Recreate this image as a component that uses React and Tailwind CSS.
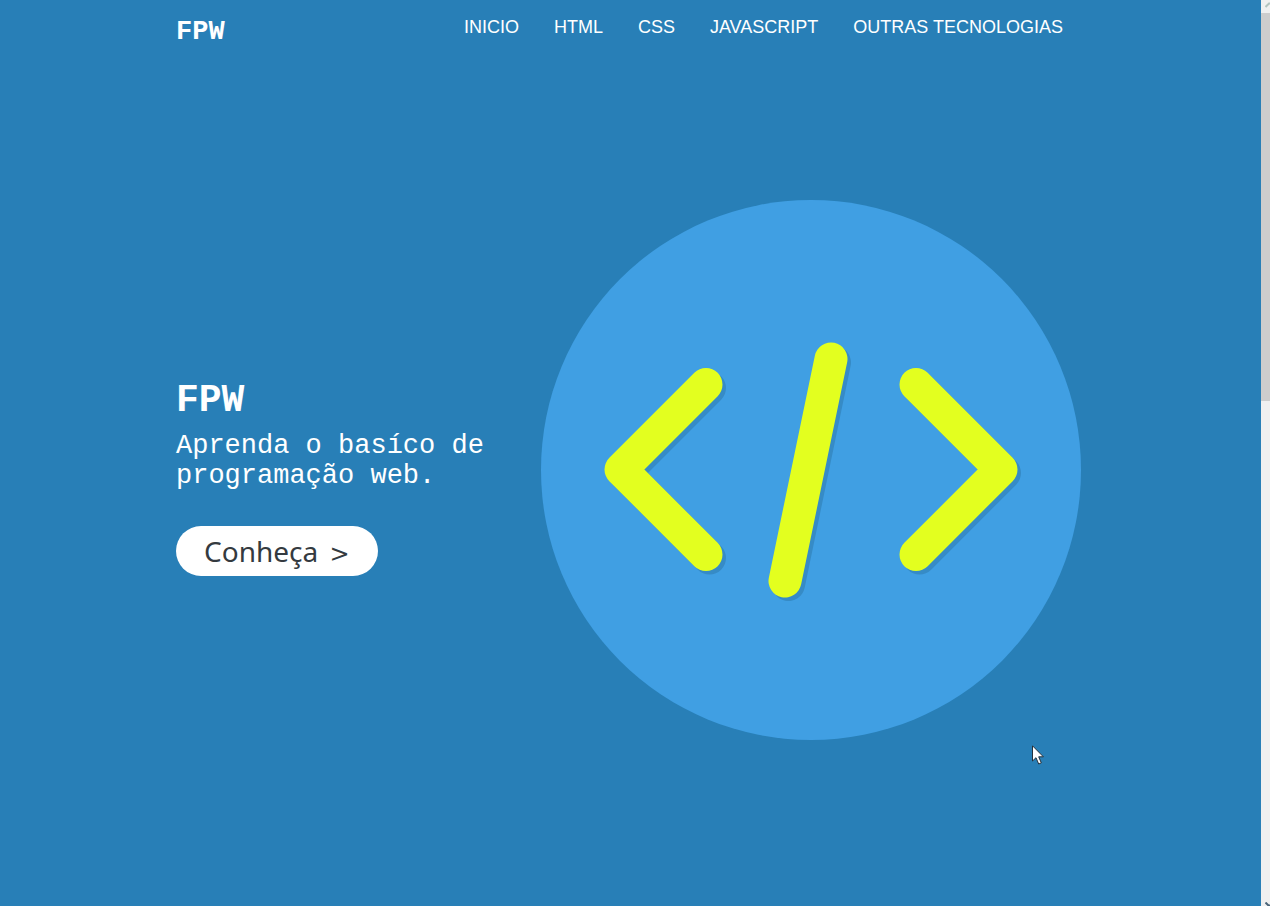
const links = ["INICIO", "HTML", "CSS", "JAVASCRIPT", "OUTRAS TECNOLOGIAS"];

function CodeBadge() {
  return (
    <svg
      viewBox="0 0 540 540"
      className="w-full max-w-[540px]"
      fill="none"
      strokeWidth="33"
      strokeLinecap="round"
      strokeLinejoin="round"
      role="img"
      aria-hidden="true"
    >
      <circle cx="270" cy="270" r="270" fill="#409fe3" />
      <g stroke="#368bc6" transform="translate(3.5 3.5)">
        <path d="M165 184.5 80 269.5 165 354.5" />
        <path d="M290 159 244 381" />
        <path d="M375 184.5 460 269.5 375 354.5" />
      </g>
      <g stroke="#e3ff1f">
        <path d="M165 184.5 80 269.5 165 354.5" />
        <path d="M290 159 244 381" />
        <path d="M375 184.5 460 269.5 375 354.5" />
      </g>
    </svg>
  );
}

function Scrollbar() {
  return (
    <div className="flex w-[9px] shrink-0 flex-col bg-[#f0f0f0]" aria-hidden="true">
      <div className="flex h-[13px] justify-end pt-[2px]">
        <svg viewBox="0 0 5 6" className="h-[6px] w-[5px]">
          <path d="M0.5 5 4 1.5H5" fill="none" stroke="#b3c4bf" strokeWidth="2" />
        </svg>
      </div>
      <div className="h-[388px] bg-[#cdcdcd]" />
      <div className="mt-auto flex justify-end">
        <svg viewBox="0 0 5 4" className="h-[4px] w-[5px]">
          <path d="M0.5 0.5 3.5 3.5H5" fill="none" stroke="#4b6478" strokeWidth="2" />
        </svg>
      </div>
    </div>
  );
}

export default function App() {
  return (
    <div className="relative flex min-h-screen bg-[#287fb7]">
      <div className="flex min-w-0 flex-1 flex-col px-44 text-white">
        <header className="flex h-[54px] items-start justify-between pr-[22px]">
          <a
            href="#inicio"
            className="pt-4 font-['Courier_New','Liberation_Mono',monospace] text-[27px] leading-[32px] font-bold"
          >
            FPW
          </a>
          <nav className="flex gap-[35px] pt-[15px] font-['Liberation_Sans',Arial,sans-serif] text-[18px] leading-[24px] whitespace-nowrap">
            {links.map((label) => (
              <a key={label} href="#inicio">
                {label}
              </a>
            ))}
          </nav>
        </header>

        <main className="flex flex-1 items-center justify-between pr-1 pb-5">
          <section className="w-[340px] shrink-0 pt-3 font-['Courier_New','Liberation_Mono',monospace]">
            <h1 className="text-[38px] leading-[48px] font-bold">FPW</h1>
            <p className="mt-[6px] text-[27px] leading-[30px]">Aprenda o basíco de programação web.</p>
            <button
              type="button"
              className="mt-[35px] h-[50px] rounded-full bg-white px-7 font-['Noto_Sans',Tahoma,sans-serif] text-[28px] leading-[50px] text-[#343a40]"
            >
              Conheça <span className="ml-1 font-['DejaVu_Sans',sans-serif] text-[24px]">&gt;</span>
            </button>
          </section>
          <CodeBadge />
        </main>
      </div>

      <Scrollbar />

      <svg viewBox="0 0 12 20" className="absolute top-[745px] left-[1032px] h-[20px] w-[12px]" aria-hidden="true">
        <path
          d="M0.5 0.8V16L4 12.7 6.7 19 9.3 17.9 6.7 11.8H11.4Z"
          fill="#fff"
          stroke="#26323c"
          strokeWidth="1"
        />
      </svg>
    </div>
  );
}
